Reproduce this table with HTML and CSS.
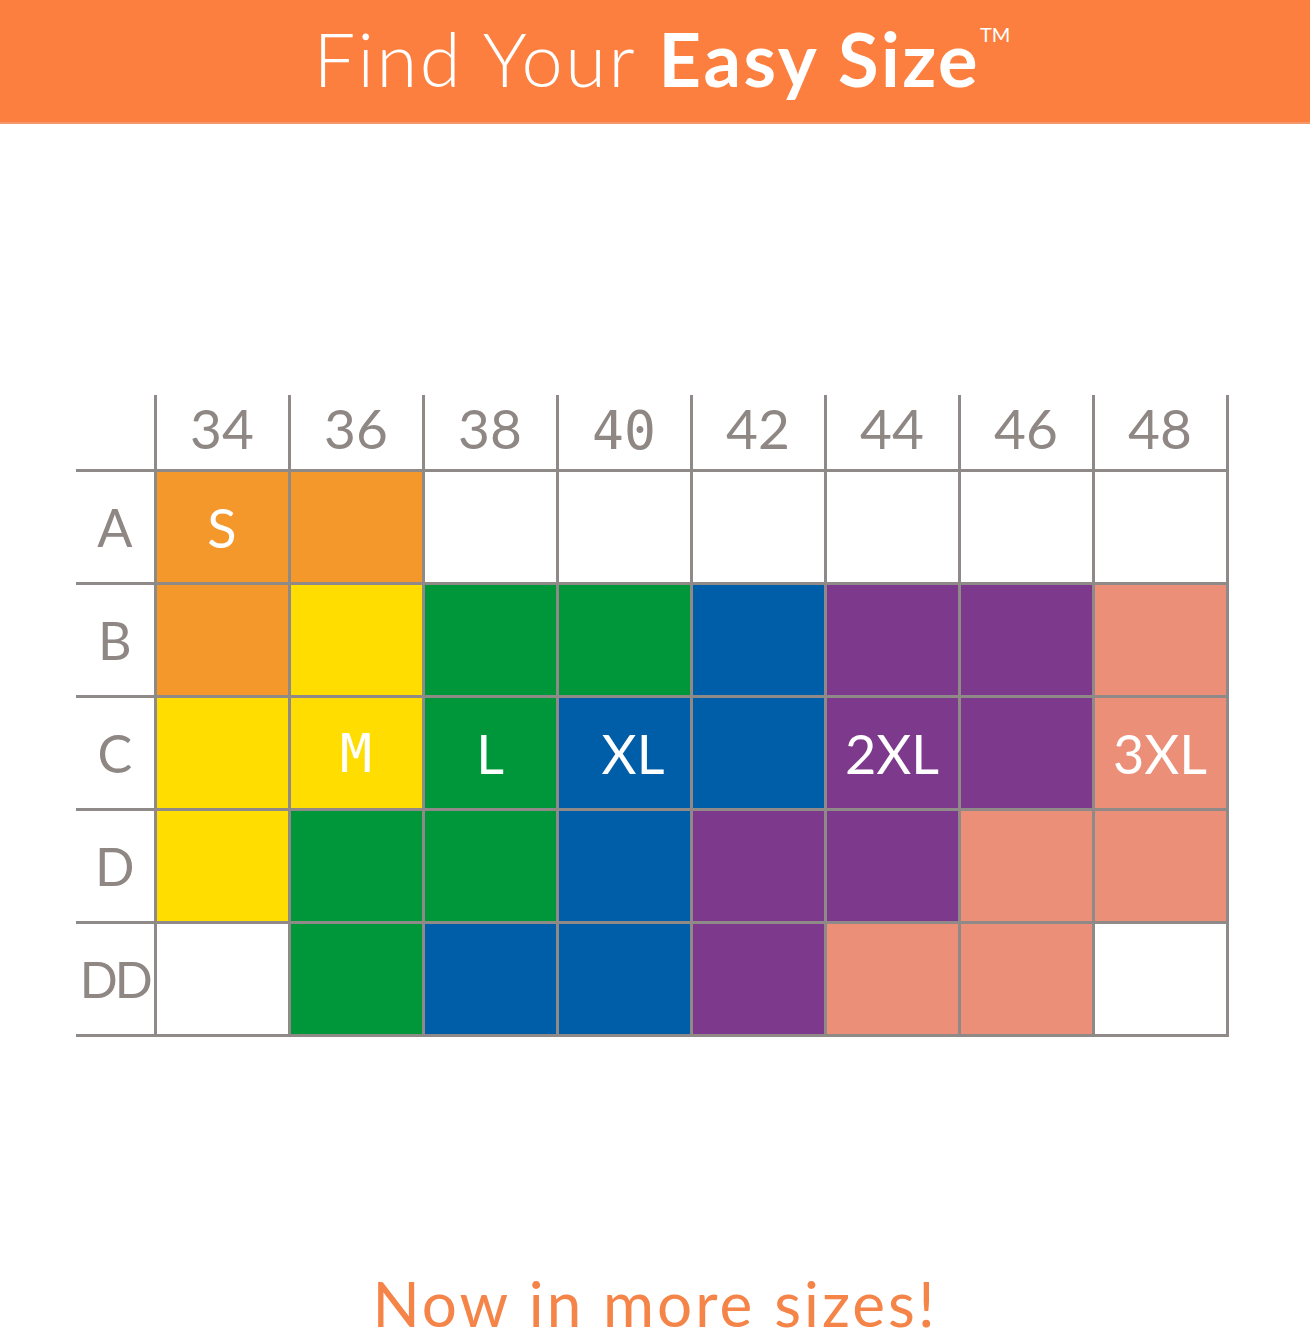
FILE: index.html
```html
<!DOCTYPE html>
<html>
<head>
<meta charset="utf-8">
<link rel="stylesheet" href="styles.css">
</head>
<body>
<header class="banner">
  <h1 class="title"><span class="light">Find Your</span> <span class="bold">Easy Size</span><sup class="tm">TM</sup></h1>
</header>
<main class="chart">
  <table class="sizes">
    <colgroup>
      <col class="c-label">
      <col class="c-data"><col class="c-data"><col class="c-data"><col class="c-data">
      <col class="c-data"><col class="c-data"><col class="c-data"><col class="c-data">
    </colgroup>
    <thead>
      <tr class="head-row">
        <th class="corner"></th>
        <th class="band">34</th>
        <th class="band">36</th>
        <th class="band">38</th>
        <th class="band mono">40</th>
        <th class="band">42</th>
        <th class="band">44</th>
        <th class="band">46</th>
        <th class="band">48</th>
      </tr>
    </thead>
    <tbody>
      <tr>
        <th class="cup">A</th>
        <td class="s">S</td><td class="s"></td><td></td><td></td><td></td><td></td><td></td><td></td>
      </tr>
      <tr>
        <th class="cup">B</th>
        <td class="s"></td><td class="m"></td><td class="l"></td><td class="l"></td><td class="xl"></td><td class="xxl"></td><td class="xxl"></td><td class="xxxl"></td>
      </tr>
      <tr>
        <th class="cup">C</th>
        <td class="m"></td><td class="m mono">M</td><td class="l">L</td><td class="xl shift">XL</td><td class="xl"></td><td class="xxl">2XL</td><td class="xxl"></td><td class="xxxl">3XL</td>
      </tr>
      <tr>
        <th class="cup">D</th>
        <td class="m"></td><td class="l"></td><td class="l"></td><td class="xl"></td><td class="xxl"></td><td class="xxl"></td><td class="xxxl"></td><td class="xxxl"></td>
      </tr>
      <tr>
        <th class="cup narrow">DD</th>
        <td></td><td class="l"></td><td class="xl"></td><td class="xl"></td><td class="xxl"></td><td class="xxxl"></td><td class="xxxl"></td><td></td>
      </tr>
    </tbody>
  </table>
  <p class="more">Now in more sizes!</p>
</main>
</body>
</html>
```
FILE: styles.css
```css
html, body {
  margin: 0;
  padding: 0;
  background: #ffffff;
}
body {
  width: 1310px;
  height: 1332px;
  overflow: hidden;
  font-family: "Lato", "Open Sans", sans-serif;
}
.banner {
  height: 122px;
  background: #fd7f3f;
  border-bottom: 2px solid #f2986b;
  display: flex;
  align-items: center;
  justify-content: center;
}
.title {
  margin: 0;
  padding: 0 0 4px 14px;
  color: #ffffff;
  font-size: 74px;
  line-height: 1;
  font-weight: 400;
  letter-spacing: 2.5px;
}
.light {
  font-weight: 300;
}
.bold {
  font-weight: 700;
}
.tm {
  font-size: 20px;
  font-weight: 400;
  vertical-align: top;
  position: relative;
  top: 2px;
  letter-spacing: 0;
}
.chart {
  padding-top: 271px;
  padding-left: 76px;
}
.sizes {
  border-collapse: collapse;
  table-layout: fixed;
  width: 1151px;
}
.c-label { width: 79px; }
.c-data { width: 134px; }
.head-row { height: 73px; }
.sizes tbody tr { height: 113px; }
.band {
  border-left: 3px solid #8f8a88;
  border-right: 3px solid #8f8a88;
  border-bottom: 3px solid #8f8a88;
  color: #8e8784;
  font-size: 55px;
  font-weight: 400;
  text-align: center;
  vertical-align: middle;
  padding: 0 0 8px 0;
}
.corner {
  border: none;
  padding: 0;
}
.cup {
  border-top: 3px solid #8f8a88;
  border-bottom: 3px solid #8f8a88;
  color: #8e8784;
  font-size: 52px;
  font-weight: 400;
  text-align: center;
  padding: 0;
}
.cup.narrow {
  letter-spacing: -3px;
  padding-right: 0;
  font-size: 50px;
}
.sizes td {
  border: 3px solid #8f8a88;
  padding: 0;
  text-align: center;
  color: #ffffff;
  font-size: 54px;
  font-weight: 400;
}
.sizes .mono {
  font-family: "DejaVu Sans Mono", monospace;
  font-size: 53px;
}
.sizes th.mono { padding-bottom: 4px; }
.sizes td.shift { padding-left: 18px; }
.sizes td.s { background: #f4982c; }
.sizes td.m { background: #ffdd00; }
.sizes td.l { background: #00963a; }
.sizes td.xl { background: #005ea8; }
.sizes td.xxl { background: #7d3a8c; }
.sizes td.xxxl { background: #eb8f78; }
.more {
  margin: 240px 0 0 -76px;
  text-align: center;
  color: #f58449;
  font-size: 62px;
  font-weight: 400;
  letter-spacing: 3px;
  line-height: 0.85;
}
```
